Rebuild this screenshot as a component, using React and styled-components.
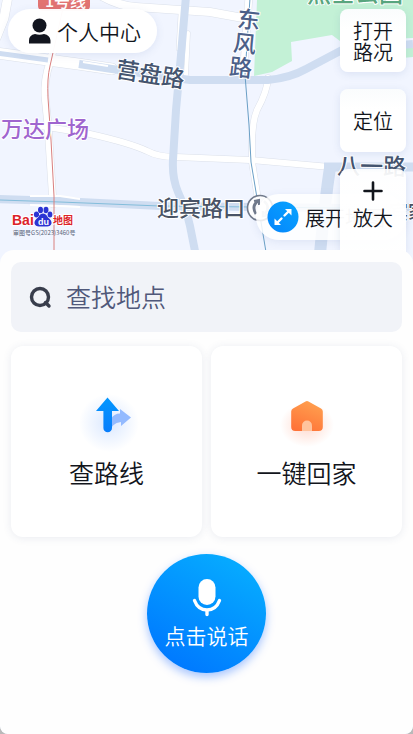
import styled, { createGlobalStyle } from 'styled-components';

const GlobalStyle = createGlobalStyle`
  * {
    box-sizing: border-box;
  }
  body {
    margin: 0;
    background: #b9b9b9;
    font-family: "Noto Sans CJK SC", "Noto Sans", sans-serif;
    color: #12151c;
  }
  button, input {
    font-family: inherit;
    font-weight: 350;
    color: inherit;
  }
`;

const Screen = styled.div`
  display: flex;
  flex-direction: column;
  min-height: 100vh;
  overflow: hidden;
  background: #f1f5ff;
  border-radius: 0 0 8px 8px;
`;

const MapArea = styled.section`
  position: relative;
  height: 264px;
  overflow: hidden;
`;

const MapCanvas = styled.svg`
  display: block;
  width: 100%;
  height: 100%;
`;

const MapLabel = styled.text`
  font-size: ${({ $size }) => $size || 22}px;
  font-weight: ${({ $weight }) => $weight || 500};
  fill: ${({ $color }) => $color || '#44546f'};
  stroke: ${({ $plain }) => ($plain ? 'none' : '#fff')};
  stroke-width: 2px;
  stroke-linejoin: round;
  paint-order: stroke;
`;

const ProfileButton = styled.button`
  position: absolute;
  top: 9px;
  left: 8px;
  display: flex;
  align-items: center;
  gap: 5px;
  height: 44px;
  padding: 0 16px 0 20px;
  border: none;
  border-radius: 22px;
  background: rgba(255, 255, 255, 0.97);
  box-shadow: 0 2px 8px rgba(60, 90, 160, 0.1);
  font-size: 21px;
  line-height: 30px;
  cursor: pointer;
`;

const ExpandButton = styled.button`
  position: absolute;
  right: 7px;
  bottom: 24px;
  display: flex;
  align-items: center;
  gap: 6px;
  width: 150px;
  height: 46px;
  padding: 0 11px;
  border: none;
  border-radius: 23px;
  background: rgba(255, 255, 255, 0.85);
  box-shadow: 0 2px 8px rgba(60, 90, 160, 0.1);
  font-size: 20px;
  white-space: nowrap;
  cursor: pointer;
`;

const MapTools = styled.div`
  position: absolute;
  top: 9px;
  right: 7px;
  display: flex;
  flex-direction: column;
  gap: 17px;
  width: 66px;
`;

const ToolButton = styled.button`
  display: flex;
  flex-direction: column;
  align-items: center;
  justify-content: center;
  gap: 6px;
  height: ${({ $tall }) => ($tall ? 84 : 63)}px;
  padding: ${({ $tall }) => ($tall ? '0 12px 13px' : '0 12px')};
  border: none;
  border-radius: ${({ $tall }) => ($tall ? '8px 8px 0 0' : '8px')};
  background: ${({ $tall }) =>
    $tall
      ? 'linear-gradient(rgba(255, 255, 255, 0.9), rgba(255, 255, 255, 0.97) 14px)'
      : 'linear-gradient(#fafcfd, #fff 20px)'};
  box-shadow: 0 2px 8px rgba(60, 90, 160, 0.12);
  font-size: 20px;
  line-height: 21px;
  cursor: pointer;
`;

const Sheet = styled.main`
  position: relative;
  flex: 1;
  display: flex;
  flex-direction: column;
  align-items: center;
  gap: 14px;
  margin-top: -14px;
  padding: 12px 11px 32px;
  border-radius: 14px 14px 8px 8px;
  background: #fefefe;
`;

const SearchBox = styled.label`
  display: flex;
  align-items: center;
  gap: 14px;
  width: 100%;
  height: 70px;
  padding: 0 18px;
  border-radius: 10px;
  background: #f1f3f8;
`;

const SearchInput = styled.input`
  flex: 1;
  min-width: 0;
  padding: 0 0 2px;
  border: none;
  outline: none;
  background: transparent;
  font-size: 25px;
  line-height: 36px;

  &::placeholder {
    color: #50587a;
    opacity: 1;
  }
`;

const CardGrid = styled.div`
  display: grid;
  grid-template-columns: 1fr 1fr;
  gap: 9px;
  width: 100%;
`;

const Card = styled.button`
  display: flex;
  flex-direction: column;
  align-items: center;
  justify-content: center;
  gap: 4px;
  aspect-ratio: 1;
  padding: 0 0 10px;
  border: none;
  border-radius: 12px;
  background: #fff;
  box-shadow: 0 1px 8px rgba(50, 70, 120, 0.1);
  font-size: 25px;
  line-height: 36px;
  cursor: pointer;

  svg {
    overflow: visible;
  }
`;

const TalkButton = styled.button`
  display: flex;
  flex-direction: column;
  align-items: center;
  justify-content: center;
  gap: 4px;
  width: 119px;
  height: 119px;
  margin-top: 3px;
  padding: 0;
  border: none;
  border-radius: 50%;
  background: linear-gradient(210deg, #06a9ff 15%, #007bff 85%);
  box-shadow: 0 4px 10px rgba(0, 90, 255, 0.35);
  color: #fff;
  font-size: 21px;
  line-height: 28px;
  cursor: pointer;
`;

const UserIcon = () => (
  <svg width="24" height="26" viewBox="0 0 24 26" fill="#12151f">
    <circle cx="11.500" cy="7.500" r="7" />
    <path d="M1 25.500v-3q0-5.500 6-6.500 4.500 1.500 9 0 6 1 6.500 6.500v3z" />
  </svg>
);

const ExpandIcon = () => (
  <svg width="32" height="32" viewBox="0 0 32 32">
    <defs>
      <linearGradient id="expandFill" x1="1" y1="0" x2="0" y2="1">
        <stop offset="0" stopColor="#08a4ff" />
        <stop offset="1" stopColor="#0585fb" />
      </linearGradient>
    </defs>
    <circle cx="16" cy="16" r="15.500" fill="url(#expandFill)" />
    <g fill="#fff">
      <path d="M18 8h6.500v6.500z" />
      <path d="M7.500 17.500V24H14z" />
    </g>
    <path d="M22 10l-4.500 4.500M14.500 17.500L10 22" stroke="#fff" strokeWidth="2.400" strokeLinecap="round" />
  </svg>
);

const PlusIcon = () => (
  <svg width="20" height="20" viewBox="0 0 20 20" stroke="#12151c" strokeWidth="2.600" strokeLinecap="round">
    <path d="M10 1.500v17M1.500 10h17" />
  </svg>
);

const SearchIcon = () => (
  <svg width="23" height="23" viewBox="0 0 23 23" fill="none" stroke="#383d4c" strokeWidth="3.400" strokeLinecap="round">
    <circle cx="11" cy="11" r="8.500" />
    <path d="M16.500 16.500l3.500 3.500" />
  </svg>
);

const RouteIcon = () => (
  <svg width="80" height="66" viewBox="0 0 80 66">
    <defs>
      <linearGradient id="routeFill" x1="0" y1="0" x2="0" y2="1">
        <stop offset="0" stopColor="#0397ff" />
        <stop offset="1" stopColor="#087dfb" />
      </linearGradient>
      <radialGradient id="routeGlow">
        <stop offset="0" stopColor="#4a8dff" stopOpacity=".2" />
        <stop offset="1" stopColor="#4a8dff" stopOpacity="0" />
      </radialGradient>
    </defs>
    <ellipse cx="42" cy="39" rx="30" ry="29" fill="url(#routeGlow)" />
    <path d="M44 44v-9q3-5.500 9-5.500V25l11 8.500L54 42v-4q-5 .3-7.500 3z" fill="#93baff" />
    <path d="M40.500 13.500L52 27H45V44a4.300 4.300 0 0 1-8.600 0V27H29z" fill="url(#routeFill)" />
  </svg>
);

const HomeIcon = () => (
  <svg width="80" height="66" viewBox="0 0 80 66">
    <defs>
      <linearGradient id="homeFill" x1=".7" y1="0" x2=".3" y2="1">
        <stop offset="0" stopColor="#ffa04f" />
        <stop offset="1" stopColor="#ff7338" />
      </linearGradient>
      <radialGradient id="homeGlow">
        <stop offset="0" stopColor="#ff6a3c" stopOpacity=".26" />
        <stop offset="1" stopColor="#ff6a3c" stopOpacity="0" />
      </radialGradient>
    </defs>
    <ellipse cx="40" cy="41" rx="27" ry="22" fill="url(#homeGlow)" />
    <path
      d="M38.500 17.500q1.500-.8 3 0l12.500 7q1.800 1 1.800 3V43q0 4-4 4H28.200q-4 0-4-4V27.500q0-2 1.800-3z"
      fill="url(#homeFill)"
    />
    <path d="M35 47v-5.500a5 5 0 0 1 10 0V47z" fill="#ffc39d" />
  </svg>
);

const MicIcon = () => (
  <svg width="30" height="38" viewBox="0 0 30 38">
    <rect x="6.500" y="0" width="17" height="26" rx="8.500" fill="#fff" />
    <path
      d="M2.500 21.500q3.500 9.500 12.500 9.500t12.500-9.500M15 31v4.500"
      fill="none"
      stroke="#fff"
      strokeWidth="3.400"
      strokeLinecap="round"
    />
  </svg>
);

const whiteRoads = [
  { d: 'M8-4L4 18-4 38', w: 9 },
  { d: 'M98-6Q118 6 136 7L210 12 243 18', w: 8 },
  { d: 'M64 8L50 62Q44 80 45 96L48 125 53 204', w: 7 },
  { d: 'M180 14L178 49', w: 3 },
  { d: 'M188 33L186 75', w: 4 },
  { d: 'M-4 53L48 60 78 64 112 69', w: 11 },
  { d: 'M40 126Q60 129 90 134 130 143 147 151 158 157 176 157L250 160 330 167', w: 6 },
  { d: 'M268 78Q267 92 257 110 252 122 252 145L252 162 260 212', w: 6 },
  { d: 'M249-4L243 78', w: 7 },
];

const blueRoads = [
  { d: 'M-4 53L48 60', w: 5 },
  { d: 'M79 64L112 69 190 80H268Q290 78 306 69L342 50 413 44', w: 8 },
  { d: 'M186-4Q184 20 181 55L176 110 173 160 Q172 178 178 192 187 212 190 226L198 266', w: 8 },
  { d: 'M-4 199L60 201 160 206 345 208 417 207', w: 8 },
  { d: 'M324 167H417', w: 9 },
  { d: 'M330 168Q325 200 319 264', w: 12 },
];

const BaiduMark = () => (
  <g>
    <MapLabel x="12" y="225" $size={14} $weight={700} $color="#dc2329" fontFamily="Liberation Sans">Bai</MapLabel>
    <g fill="#2b34d3" stroke="#fff" strokeWidth="1" paintOrder="stroke">
      <ellipse cx="36.500" cy="214.500" rx="2.600" ry="3" />
      <ellipse cx="40.500" cy="210" rx="2.500" ry="3.200" />
      <ellipse cx="46" cy="210" rx="2.500" ry="3.200" />
      <ellipse cx="50" cy="214.500" rx="2.400" ry="3" />
      <path d="M43 213.500q3 0 5 4 4 3 3.500 6-1 3.500-5.500 3H40q-4.500.5-5.500-3-.5-3 3.500-6 2-4 5-4z" />
    </g>
    <MapLabel x="38" y="225" $size={9} $weight={700} $color="#fff" $plain fontFamily="Liberation Sans">du</MapLabel>
    <MapLabel x="53" y="224" $size={10} $weight={700} $color="#dc2329">地图</MapLabel>
    <text x="13" y="235" fontSize="6" fill="#59647a">审图号GS(2023)3460号</text>
  </g>
);

const CityMap = () => (
  <MapCanvas viewBox="0 0 413 264" preserveAspectRatio="xMidYMid slice" aria-label="地图">
    <rect width="413" height="264" fill="#f1f5ff" />
    <path d="M257 0L254 76 272 72 292 61 291 42 332 35 340 41 413 38V0z" fill="#c3f1d6" />
    <path d="M370 50L413 46V57L380 60z" fill="#c3f1d6" />
    <g fill="none" strokeLinejoin="round">
      <g strokeLinecap="round">
        {whiteRoads.map((r) => (
          <path key={r.d} d={r.d} stroke="#dbe0ea" strokeWidth={r.w + 1} />
        ))}
        {whiteRoads.map((r) => (
          <path key={r.d} d={r.d} stroke="#fff" strokeWidth={r.w} />
        ))}
      </g>
      {blueRoads.map((r) => (
        <path key={r.d} d={r.d} stroke="#cfddf1" strokeWidth={r.w} />
      ))}
      <path d="M30 196L60 196 80 199M30 205L60 206 80 207" stroke="#fff" strokeWidth="2" />
      <path d="M83 62L108 66" stroke="#fff" strokeWidth="2" />
      <path d="M0 200L60 202 160 206 345 208 413 207" stroke="#83bddb" />
      <path d="M250-2L245 75 249 125 251 162 259 210 268 264" stroke="#6a9fc6" />
      <path d="M63 8L50 66Q47 78 48 98L51 140 54 196V264" stroke="#d9807f" />
    </g>

    <rect x="38" y="-12" width="52" height="23" rx="5" fill="#e27472" />
    <MapLabel x="45" y="7" $size={16} $color="#fff" $plain>1号线</MapLabel>
    <MapLabel x="307" y="2" $size={24} $color="#58a57e">烈士公园</MapLabel>
    <MapLabel transform="translate(115 77) rotate(9)" $size={23}>营盘路</MapLabel>
    <g textAnchor="middle">
      <MapLabel transform="translate(248 28) rotate(6)" $size={23} $color="#4b6089">东</MapLabel>
      <MapLabel transform="translate(244 52) rotate(6)" $size={23} $color="#4b6089">风</MapLabel>
      <MapLabel transform="translate(240 76) rotate(6)" $size={23} $color="#4b6089">路</MapLabel>
    </g>
    <MapLabel x="1" y="137" $color="#9f66cf">万达广场</MapLabel>
    <MapLabel x="157" y="216" $color="#495365">迎宾路口</MapLabel>
    <MapLabel transform="translate(337 174) rotate(1)" $size={23}>八一路</MapLabel>
    <MapLabel x="389" y="219" $size={19} $color="#495365">宾家</MapLabel>

    <g fill="none" stroke="#727b8c" strokeWidth="1.600">
      <circle cx="260" cy="208" r="12.500" fill="#fff" />
      <path d="M256 214Q251 206 258 201" strokeWidth="2.800" />
      <path d="M254 201l5-1 0 5" strokeWidth="2" />
      <path d="M264 201Q271 207 265 214M268 215l-5 1v-5" stroke="#c9cdd6" strokeWidth="2.600" />
    </g>
    <BaiduMark />
  </MapCanvas>
);

const App = () => {
  return (
    <>
      <GlobalStyle />
      <Screen>
        <MapArea>
          <CityMap />
          <ProfileButton type="button">
            <UserIcon />
            个人中心
          </ProfileButton>
          <ExpandButton type="button">
            <ExpandIcon />
            展开地图
          </ExpandButton>
          <MapTools>
            <ToolButton type="button">打开路况</ToolButton>
            <ToolButton type="button">定位</ToolButton>
            <ToolButton type="button" $tall>
              <PlusIcon />
              放大
            </ToolButton>
          </MapTools>
        </MapArea>

        <Sheet>
          <SearchBox htmlFor="place">
            <SearchIcon />
            <SearchInput id="place" type="text" placeholder="查找地点" />
          </SearchBox>
          <CardGrid>
            <Card type="button">
              <RouteIcon />
              查路线
            </Card>
            <Card type="button">
              <HomeIcon />
              一键回家
            </Card>
          </CardGrid>
          <TalkButton type="button">
            <MicIcon />
            点击说话
          </TalkButton>
        </Sheet>
      </Screen>
    </>
  );
};

export default App;
